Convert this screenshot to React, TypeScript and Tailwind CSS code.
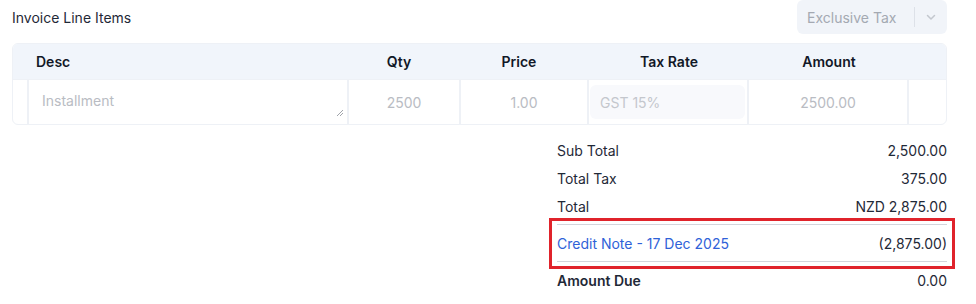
import React from "react";

function TotalRow({ label, value, bold }: { label: string; value: string; bold?: boolean }) {
  return (
    <div className="flex h-7 items-center justify-between">
      <span className={bold ? "font-semibold" : ""}>{label}</span>
      <span>{value}</span>
    </div>
  );
}

export default function App() {
  return (
    <div className="min-h-[304px] bg-white font-['Inter',sans-serif] text-[14px] text-[#1f2937]">
      <div className="ml-3 w-[935px]">
        {/* Heading + tax mode select */}
        <div className="flex h-[34px] items-center justify-between">
          <h2 className="text-[14px] font-normal text-[#1f2937]">Invoice Line Items</h2>
          <div className="flex h-[34px] w-[150px] items-center rounded-md bg-[#f1f4f9] text-[#a4a9b2]">
            <span className="flex-1 pl-[10px]">Exclusive Tax</span>
            <span className="h-[20px] w-px bg-[#dde1e8]" />
            <span className="flex w-[32px] items-center justify-center">
              <svg width="12" height="12" viewBox="0 0 24 24" fill="none" stroke="#c3c7ce" strokeWidth="3" strokeLinecap="round" strokeLinejoin="round">
                <path d="M5 9l7 7 7-7" />
              </svg>
            </span>
          </div>
        </div>

        {/* Line items table */}
        <div className="mt-[9px] overflow-hidden rounded-md border border-[#eef1f6]">
          <div className="flex h-[35px] items-center bg-[#f1f5fb] font-semibold text-[#111827]">
            <div className="w-[16px]" />
            <div className="w-[320px] pl-[7px]">Desc</div>
            <div className="w-[112px] pr-3 text-center">Qty</div>
            <div className="w-[128px] pr-3 text-center">Price</div>
            <div className="w-[160px] text-center">Tax Rate</div>
            <div className="w-[160px] text-center">Amount</div>
            <div className="flex-1" />
          </div>
          <div className="flex h-[45px] border-t border-[#eef1f6] text-[#b9bcc3]">
            <div className="w-[16px] border-r-2 border-[#eef1f6]" />
            <div className="relative flex w-[320px] border-r-2 border-[#eef1f6] pl-[13px] pt-[10px]">
              <span>Installment</span>
              <svg className="absolute bottom-[7px] right-[3px]" width="8" height="8" viewBox="0 0 8 8" stroke="#a0a4ab" strokeWidth="1">
                <path d="M1 7L7 1M4 7L7 4" />
              </svg>
            </div>
            <div className="flex w-[112px] items-center justify-center border-r-2 border-[#eef1f6]">2500</div>
            <div className="flex w-[128px] items-center justify-center border-r-2 border-[#eef1f6]">1.00</div>
            <div className="flex w-[160px] border-r-2 border-[#eef1f6] py-[5px] pl-[1px] pr-[2px]">
              <div className="flex flex-1 items-center rounded-md bg-[#f8f9fc] pl-[10px] text-[#c4c7cd]">GST 15%</div>
            </div>
            <div className="flex w-[160px] items-center justify-center border-r-2 border-[#eef1f6]">2500.00</div>
            <div className="flex-1" />
          </div>
        </div>

        {/* Totals */}
        <div className="ml-auto mt-[11px] w-[390px]">
          <TotalRow label="Sub Total" value="2,500.00" />
          <TotalRow label="Total Tax" value="375.00" />
          <TotalRow label="Total" value="NZD 2,875.00" />
          <div className="relative mt-[4px]">
            <div className="flex h-[38px] items-center justify-between border-y border-[#d3d5dc]">
              <a className="text-[#2f62d8]">Credit Note - 17 Dec 2025</a>
              <span>(2,875.00)</span>
            </div>
            <div className="pointer-events-none absolute -bottom-[7px] -left-[8px] -right-[8px] -top-[6px] border-[3px] border-[#e0232b]" />
          </div>
          <div className="flex h-[37px] items-center justify-between">
            <span className="font-semibold">Amount Due</span>
            <span>0.00</span>
          </div>
        </div>
      </div>
    </div>
  );
}
